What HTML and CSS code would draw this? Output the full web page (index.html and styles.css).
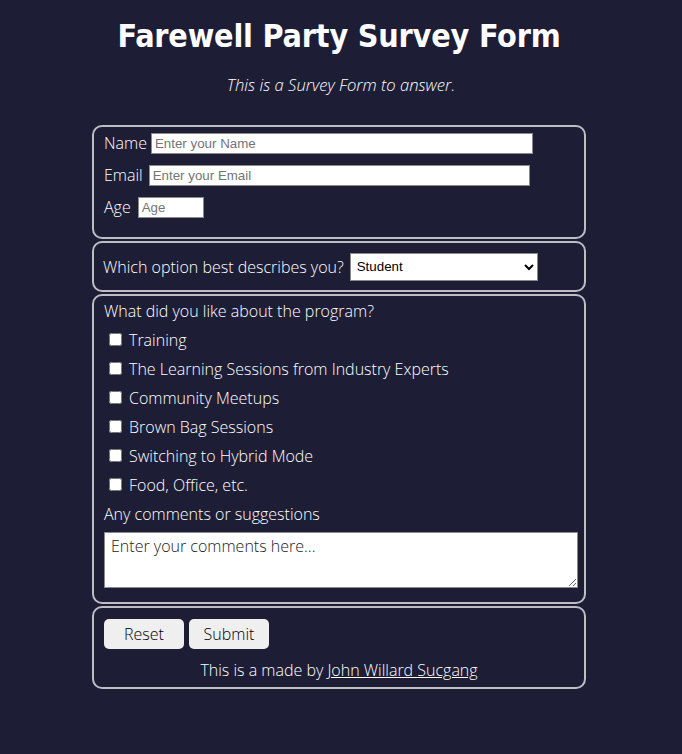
FILE: index.html
```html
<!DOCTYPE html>
<html>
<head>
<meta charset="utf-8">
<link rel="stylesheet" href="styles.css">
</head>
<body>
<h1 class="title">Farewell Party Survey Form</h1>
<p class="subtitle">This is a Survey Form to answer.</p>
<form class="survey">
  <fieldset class="box box-info">
    <div class="row"><label for="name">Name</label><input id="name" class="in-name" type="text" placeholder="Enter your Name"></div>
    <div class="row"><label for="email">Email</label><input id="email" class="in-email" type="email" placeholder="Enter your Email"></div>
    <div class="row"><label for="age">Age</label><input id="age" class="in-age" type="number" placeholder="Age"></div>
  </fieldset>
  <fieldset class="box box-role">
    <label for="role">Which option best describes you?</label>
    <select id="role" class="role-select">
      <option>Student</option>
      <option>Full Time Job</option>
      <option>Prefer not to say</option>
    </select>
  </fieldset>
  <fieldset class="box box-likes">
    <div class="question">What did you like about the program?</div>
    <label class="check"><input type="checkbox"><span>Training</span></label>
    <label class="check"><input type="checkbox"><span>The Learning Sessions from Industry Experts</span></label>
    <label class="check"><input type="checkbox"><span>Community Meetups</span></label>
    <label class="check"><input type="checkbox"><span>Brown Bag Sessions</span></label>
    <label class="check"><input type="checkbox"><span>Switching to Hybrid Mode</span></label>
    <label class="check"><input type="checkbox"><span>Food, Office, etc.</span></label>
    <div class="question q-comments">Any comments or suggestions</div>
    <textarea class="comments" placeholder="Enter your comments here..."></textarea>
  </fieldset>
  <fieldset class="box box-actions">
    <div class="buttons">
      <button type="reset" class="btn">Reset</button>
      <button type="submit" class="btn">Submit</button>
    </div>
    <p class="credit">This is a made by <a href="#" class="credit-link">John Willard Sucgang</a></p>
  </fieldset>
</form>
</body>
</html>
```
FILE: styles.css
```css
html, body {
  margin: 0;
  padding: 0;
}
body {
  background: #1d1d36;
  color: #ffffff;
  font-family: "Open Sans", sans-serif;
  font-weight: 300;
  font-size: 16px;
}
.title {
  font-family: "DejaVu Sans", sans-serif;
  font-weight: bold;
  font-stretch: condensed;
  font-size: 32px;
  letter-spacing: -0.2px;
  text-align: center;
  margin: 17px 0 0;
  padding-right: 4px;
  line-height: 38px;
}
.subtitle {
  text-align: center;
  font-style: italic;
  font-size: 16.6px;
  margin: 20px 0 0;
  line-height: 20px;
}
.survey {
  width: 494px;
  padding-right: 4px;
  margin: 30px auto 0;
}
.box {
  border: 2px solid #bdbdc4;
  border-radius: 10px;
  margin: 0 0 2px;
  padding: 0 10px;
  min-width: 0;
}
.box-info {
  padding-bottom: 14px;
}
.row {
  display: flex;
  align-items: center;
  height: 32px;
  gap: 4px;
}
.row input {
  font-family: "Liberation Sans", Arial, sans-serif;
  font-size: 13.333px;
  font-weight: normal;
  height: 21px;
  box-sizing: border-box;
  border: 1px solid #8a8a8a;
  padding: 1px 3px;
  margin: 0;
  background: #fff;
}
.row input::placeholder {
  color: #757575;
}
.row .in-name { width: 382px; }
.row .in-email { width: 381px; margin-left: 2px; }
.row .in-age { width: 66px; margin-left: 3px; }
.box-role {
  display: flex;
  align-items: center;
  gap: 6px;
  height: 51px;
  box-sizing: border-box;
  padding: 0 9px;
}
.role-select {
  font-family: "Liberation Sans", Arial, sans-serif;
  font-size: 13.333px;
  font-weight: normal;
  width: 188px;
  height: 28px;
  border: 1px solid #8a8a8a;
  background: #fff;
  color: #000;
  padding: 0 2px;
}
.box-likes {
  padding: 3px 6px 14px 10px;
}
.question {
  line-height: 24px;
  margin-bottom: 2px;
}
.check {
  display: flex;
  align-items: center;
  height: 29px;
}
.check input {
  width: 13px;
  height: 13px;
  margin: 0 7px 0 5px;
}
.q-comments {
  margin-top: 3px;
  margin-bottom: 0;
}
.comments {
  display: block;
  box-sizing: border-box;
  width: 474px;
  height: 56px;
  margin-top: 6px;
  font-family: "Open Sans", sans-serif;
  font-weight: 300;
  font-size: 16px;
  border: 1px solid #8a8a8a;
  padding: 2px 6px;
}
.comments::placeholder {
  color: #222;
}
.box-actions {
  padding: 11px 10px 7px;
}
.buttons {
  display: flex;
  gap: 5px;
}
.btn {
  width: 80px;
  height: 30px;
  border: none;
  border-radius: 5px;
  background: #efefef;
  color: #000;
  font-family: "Open Sans", sans-serif;
  font-weight: 300;
  font-size: 16px;
}
.credit {
  text-align: center;
  margin: 11px 0 0;
  line-height: 20px;
}
.credit-link {
  color: #fff;
}
```
